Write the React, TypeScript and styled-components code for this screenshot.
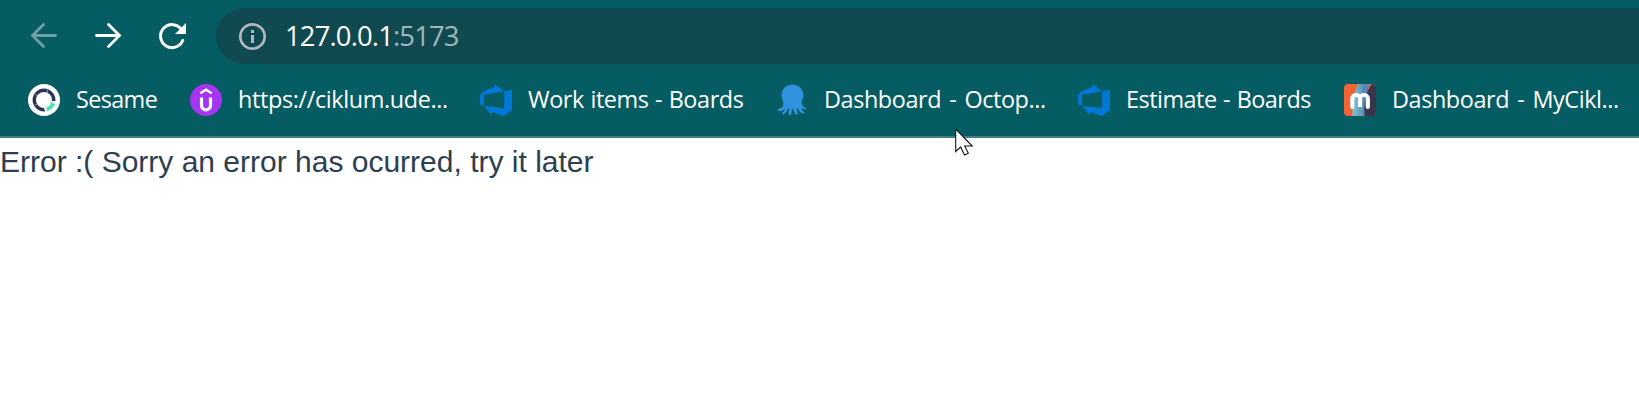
import React from 'react';
import styled, { createGlobalStyle } from 'styled-components';

const GlobalStyle = createGlobalStyle`
  body { margin: 0; background: #fff; overflow: hidden; }
  svg { display: block; flex: none; }
`;

const Window = styled.div`
  position: relative;
  height: 411px;
  overflow: hidden;
  background: #fff;
`;

const Chrome = styled.header`
  box-sizing: border-box;
  height: 138px;
  background: #055c62;
  border-bottom: 2px solid #437e83;
  color: #fff;
  font-family: 'Open Sans', 'Noto Sans', sans-serif;
`;

const Toolbar = styled.div`
  display: flex;
  align-items: center;
  height: 56px;
  padding: 8px 0 8px 28px;
`;

const NavButton = styled.button<{ $dim?: boolean }>`
  display: flex;
  width: 32px;
  height: 32px;
  margin: 0 32px 0 0;
  padding: 0;
  border: 0;
  background: none;
  color: ${(p) => (p.$dim ? '#72a1a5' : '#fff')};
  &:last-of-type { margin-right: 28px; }
`;

const AddressBar = styled.div`
  display: flex;
  flex: 1;
  align-items: center;
  height: 56px;
  padding-left: 20px;
  border-radius: 28px 0 0 28px;
  background: #10494f;
  color: #b3b8be;
`;

const Url = styled.span`
  margin-left: 17px;
  font-size: 27.4px;
  line-height: 36px;
  letter-spacing: -0.84px;
  white-space: pre;
  color: #fff;
`;

const Port = styled.span`
  color: #9fb6b9;
`;

const Bookmarks = styled.nav`
  display: flex;
  padding: 11px 0 0 28px;
`;

const Bookmark = styled.a<{ $width: number }>`
  display: flex;
  flex: none;
  align-items: center;
  gap: 16px;
  width: ${(p) => p.$width}px;
  height: 34px;
`;

const Label = styled.span<{ $tracking: number; $wordGap: number }>`
  padding-bottom: 2px;
  font-size: 23.4px;
  line-height: 32px;
  letter-spacing: ${(p) => p.$tracking}px;
  word-spacing: ${(p) => p.$wordGap}px;
  white-space: nowrap;
`;

const Message = styled.main`
  padding-top: 6px;
  color: #2c3e50;
  font-family: 'Liberation Sans', Arial, sans-serif;
  font-size: 30px;
  line-height: 36px;
  white-space: nowrap;
`;

const Pointer = styled.svg`
  position: absolute;
  left: 955px;
  top: 128px;
`;

const SesameIcon = () => (
  <svg width="32" height="32" viewBox="0 0 32 32" fill="none">
    <circle cx="16" cy="16" r="16" fill="#fff" />
    <circle cx="16" cy="16" r="9.7" stroke="#2c3458" strokeWidth="3.4" />
    <path d="M28 17.2C26.500 23 23 26.500 17.500 28L15.800 23.800C20 23 23 20.500 24 17Z" fill="#fff" />
    <path d="M25.300 19.300A10.200 10.200 0 0 1 18.800 25.300" stroke="#4fe3b0" strokeWidth="4" />
    <path d="M7.500 10.500l3 2M7 21l3-1.500M20 5.500l-1 3" stroke="#fff" strokeWidth=".6" />
  </svg>
);

const UdemyIcon = () => (
  <svg width="32" height="32" viewBox="0 0 32 32" fill="none" stroke="#fff">
    <circle cx="16" cy="16" r="16" fill="#a435f0" stroke="none" />
    <path d="M10.3 9.2L16 5.8l5.700 3.400" strokeWidth="2.500" />
    <path d="M11.500 13.500v7.700c0 6.200 9 6.200 9 0v-7.700" strokeWidth="3.200" />
  </svg>
);

const BoardsIcon = () => (
  <svg width="32" height="32" viewBox="0 0 32 32">
    <path
      fill="#0078d7"
      fillRule="evenodd"
      d="M0 11.5L3 7.6 14.3 3V0L24.3 7.2 32 5.8V26L24 32 12 28V32L4 21.8 0 20.6ZM4 10.7V21.8L24.2 24.2V7.2Z"
    />
  </svg>
);

const OctopusIcon = () => (
  <svg width="32" height="32" viewBox="0 0 32 32">
    <path
      fill="#2f93e0"
      d="M16.5 .8C9.8.8 5.6 5.5 5.6 11.5c0 3.8 1.8 5.700 1.8 8.2 0 3.5-2.6 4.4-5.4 5.4-.7.3-.7 1.4.2 1.6 2.4.6 4.5-.1 6.6-1.8-.2 2-1.8 3.2-2.6 4.2-.6.8.3 1.8 1.3 1.4 2.6-1.2 3.5-4.4 4.6-6 1 .1.9 1.7.6 3-.3 1.6 0 3.5.9 3.8 2.2.5 2-4.8 2.8-6.8.9.4 1.1 2 1.8 3.6.7 1.8 2 3.3 2.9 2.8 1.7-.9-.8-4.7-.5-6.8 1.2.3 2 2.3 3.7 4 1.4 1.4 3.2 2.2 3.8 1.4.6-.9-1-2-2-3.5-.5-.7-.8-1.4-.5-1.700 1 .3 2.9 1.4 4.2.6.8-.7-.7-1.2-1.8-2.2-1.5-1.2-2.4-2.5-2.4-4.3 0-2.1 1.9-4 1.9-7C27.3 5.5 23.2.8 16.5.8Z"
    />
  </svg>
);

const MyCiklumIcon = () => (
  <svg width="32" height="32" viewBox="0 0 32 32">
    <defs>
      <clipPath id="tile"><rect width="32" height="32" rx="4" /></clipPath>
      <linearGradient id="blue" x1="0" y1="0" x2="1" y2="0">
        <stop offset="0" stopColor="#83c5d5" />
        <stop offset="1" stopColor="#4b7ca5" />
      </linearGradient>
    </defs>
    <g clipPath="url(#tile)">
      <rect width="32" height="32" fill="#f26336" />
      <path d="M14.5 0C9.5 8 8 18 8.5 32H24V0Z" fill="url(#blue)" />
      <path d="M28 0c-6 7-8.500 18-7.500 32H32V0Z" fill="#39354c" />
      <path d="M21 0h6c-3 3-5 7-6.500 13L18 10C18 6 19 3 21 0Z" fill="#5a86b4" />
    </g>
    <path d="M8.300 23V14.500C8.300 9.800 16 9.800 16 14.500V23v-8.500c0-4.700 7.800-4.700 7.800 0V23" fill="none" stroke="#fff" strokeWidth="4.200" strokeLinecap="round" />
  </svg>
);

const bookmarks = [
  { title: 'Sesame', width: 162, tracking: -0.62, wordGap: 0, Icon: SesameIcon },
  { title: 'https://ciklum.ude...', width: 290, tracking: -0.36, wordGap: 0, Icon: UdemyIcon },
  { title: 'Work items - Boards', width: 296, tracking: -0.4, wordGap: 0.8, Icon: BoardsIcon },
  { title: 'Dashboard - Octop...', width: 302, tracking: -0.4, wordGap: 2.4, Icon: OctopusIcon },
  { title: 'Estimate - Boards', width: 266, tracking: -0.5, wordGap: 1, Icon: BoardsIcon },
  { title: 'Dashboard - MyCikl...', width: 295, tracking: -0.4, wordGap: 2.4, Icon: MyCiklumIcon },
];

export default function App() {
  return (
    <Window>
      <GlobalStyle />
      <Chrome>
        <Toolbar>
          <NavButton $dim aria-label="Back">
            <svg width="32" height="32" viewBox="0 0 32 32" fill="none" stroke="currentColor" strokeWidth="2.800" strokeLinecap="round">
              <path d="M27.500 15.500H4.500M15.500 4.500L4.500 15.500l11 11" />
            </svg>
          </NavButton>
          <NavButton aria-label="Forward">
            <svg width="32" height="32" viewBox="0 0 32 32" fill="none" stroke="currentColor" strokeWidth="2.800" strokeLinecap="round">
              <path d="M4.500 15.500h23M16.500 4.500l11 11-11 11" />
            </svg>
          </NavButton>
          <NavButton aria-label="Reload">
            <svg width="32" height="32" viewBox="0 0 32 32" fill="none">
              <path d="M26.700 20.500A11.500 11.500 0 1 1 25.500 9.500" stroke="currentColor" strokeWidth="3" strokeLinecap="round" />
              <path d="M30 3v11H19Z" fill="currentColor" />
            </svg>
          </NavButton>
          <AddressBar>
            <svg width="32" height="32" viewBox="0 0 32 32" fill="none">
              <circle cx="16.500" cy="16.500" r="12.200" stroke="currentColor" strokeWidth="2.700" />
              <path d="M15 10h3v3h-3zM15 15h3v8h-3z" fill="currentColor" />
            </svg>
            <Url>127.0.0.1<Port>:5173</Port></Url>
          </AddressBar>
        </Toolbar>
        <Bookmarks>
          {bookmarks.map(({ title, width, tracking, wordGap, Icon }) => (
            <Bookmark key={title} $width={width}>
              <Icon />
              <Label $tracking={tracking} $wordGap={wordGap}>{title}</Label>
            </Bookmark>
          ))}
        </Bookmarks>
      </Chrome>
      <Message>Error :( Sorry an error has ocurred, try it later</Message>
      <Pointer width="20" height="29" viewBox="0 0 20 29">
        <path d="M.7 1v22.500l5-4.500 3.800 8 3.800-1.700L9.700 18h7.500Z" fill="#fff" stroke="#16161f" strokeWidth="1.100" />
      </Pointer>
    </Window>
  );
}
